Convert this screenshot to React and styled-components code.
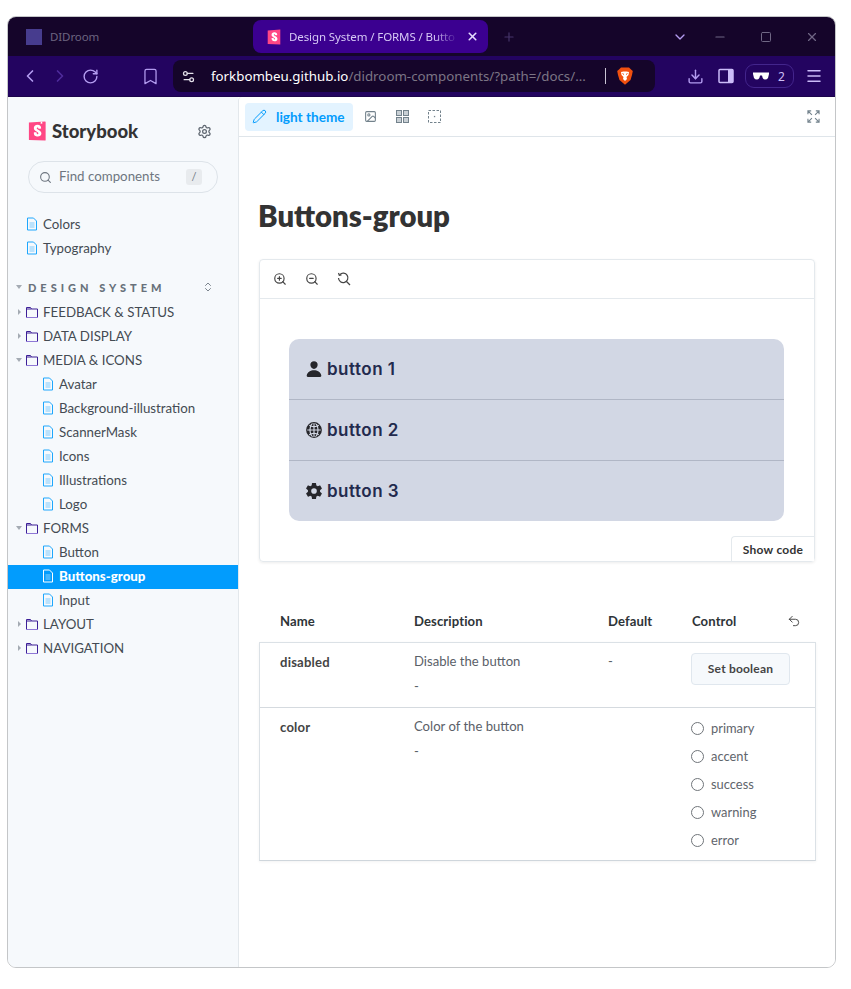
import React from 'react'
import styled, { createGlobalStyle } from 'styled-components'
import {
  Bookmark, ChevronDown, ChevronLeft, ChevronRight, Download, Image, Menu, Minus, Pencil, Plus,
  RotateCw, Search, Settings, Settings2, Square, Undo2, X, ZoomIn, ZoomOut, ChevronsUpDown,
} from 'lucide-react'
import { IoPerson, IoGlobe, IoSettingsSharp } from 'react-icons/io5'

const sans = '"Lato", "Open Sans", sans-serif'
const chromeFont = '"Noto Sans", "Open Sans", sans-serif'

const Global = createGlobalStyle`
  html, body { margin: 0; background: #fff; }
  * { box-sizing: border-box; }
`

const Window = styled.div`
  width: 829px;
  height: 952px;
  margin: 16px 0 0 7px;
  border: 1px solid #c4c6c8;
  border-radius: 9px;
  overflow: hidden;
  display: flex;
  flex-direction: column;
  font-family: ${sans};
`

const TitleBar = styled.div`
  height: 39px;
  background: #15052a;
  flex: none;
  display: flex;
  align-items: flex-start;
  padding-top: 3px;
  font-family: ${chromeFont};
  font-size: 11.5px;
  letter-spacing: -0.1px;
`

const PinnedTab = styled.div`
  width: 245px;
  height: 33px;
  display: flex;
  align-items: center;
  gap: 8px;
  padding-left: 18px;
  color: #6c6480;
`

const Favicon = styled.span`
  width: 16px;
  height: 16px;
  background: #473c8e;
`

const ActiveTab = styled.div`
  width: 235px;
  height: 33px;
  border-radius: 8px;
  background: #3b0090;
  color: #d6c8f5;
  display: flex;
  align-items: center;
  padding: 0 9px 0 14px;
  gap: 8px;
`

const TabTitle = styled.span`
  flex: 1;
  white-space: nowrap;
  mask-image: linear-gradient(to right, #000 86%, transparent);
`

const NewTab = styled.span`
  margin-left: 14px;
  height: 33px;
  display: flex;
  align-items: center;
  color: #46356a;
`

const WindowControls = styled.div`
  margin-left: auto;
  height: 33px;
  display: flex;
  align-items: center;
  padding-right: 16px;
  gap: 33px;
  color: #6f6784;
`

const TabMenu = styled.span`
  display: flex;
  margin-right: -8px;
  color: #b39cf0;
`

const ToolBar = styled.div`
  height: 41px;
  flex: none;
  background: #230460;
  border-bottom: 1px solid #1c044b;
  display: flex;
  align-items: center;
  padding-left: 7px;
  color: #b39cf0;
  font-family: ${chromeFont};
`

const NavIcons = styled.div`
  width: 158px;
  display: grid;
  grid-template-columns: repeat(5, 30px);
  justify-items: center;
  align-items: center;
`

const NavGap = styled.span``

const UrlBar = styled.div`
  width: 482px;
  height: 32px;
  border-radius: 8px;
  background: #15052a;
  display: flex;
  align-items: center;
  padding: 0 22px 0 8px;
  font-size: 13.3px;
  color: #7c7585;
`

const UrlHost = styled.span`
  color: #fff;
  margin-left: 15px;
`

const UrlDivider = styled.span`
  width: 1px;
  height: 16px;
  background: #c9c4d4;
  margin: 0 11px 0 auto;
`

const ToolActions = styled.div`
  display: flex;
  align-items: center;
  margin-left: 32px;
  gap: 11px;
`

const DownloadSlot = styled.span`
  display: flex;
  margin-right: 2.5px;
`

const ShieldPill = styled.div`
  width: 49px;
  height: 24px;
  border: 1px solid #43258c;
  border-radius: 9px;
  display: flex;
  align-items: center;
  justify-content: center;
  gap: 9px;
  font-size: 12px;
  color: #cdbff5;
`

const Body = styled.div`
  flex: 1;
  display: flex;
  min-height: 0;
`

const Sidebar = styled.aside`
  width: 230px;
  flex: none;
  background: #f6f9fc;
  padding: 23px 0 0;
  color: #333;
  font-size: 13.3px;
`

const Brand = styled.div`
  height: 22px;
  display: flex;
  align-items: center;
  padding: 0 26px 0 20px;
  gap: 6px;
`

const BrandName = styled.span`
  flex: 1;
  font-size: 18.5px;
  font-weight: 900;
  color: #333;
`

const SearchBox = styled.div`
  margin: 19px 20px 0;
  height: 32px;
  border: 1px solid #dde3e9;
  border-radius: 16px;
  display: flex;
  align-items: center;
  padding: 0 15px 0 10px;
  gap: 7px;
  color: #6e7680;
`

const SearchLabel = styled.span`
  flex: 1;
  padding-bottom: 2px;
`

const Kbd = styled.span`
  width: 16px;
  height: 16px;
  border-radius: 3px;
  background: #e8ebee;
  font-size: 11px;
  text-align: center;
  line-height: 16px;
`

const TopLinks = styled.div`
  margin-top: 20px;
`

const Row = styled.div`
  height: 24px;
  display: flex;
  align-items: center;
  padding: 0 0 3px ${p => p.$depth === 2 ? 33 : p.$depth === 1 ? 17 : 8}px;
  gap: 4px;
  color: ${p => p.$active ? '#fff' : '#444b53'};
  background: ${p => p.$active ? '#029cfd' : 'transparent'};
  font-weight: ${p => p.$active ? 900 : 400};
`

const RowLabel = styled.span`
  white-space: nowrap;
`

const Caret = styled.span`
  width: 0;
  height: 0;
  flex: none;
  border-style: solid;
  ${p => p.$open
    ? 'margin-right: -1px; border-width: 4px 3px 0 3px; border-color: #a4abb3 transparent transparent transparent;'
    : 'margin: 0 0 0 2px; border-width: 3px 0 3px 3px; border-color: transparent transparent transparent #a4abb3;'}
`

const Section = styled.div`
  height: 24px;
  margin: 15px 0 1px;
  display: flex;
  align-items: center;
  padding: 0 24px 2px 8px;
  font-size: 11px;
  font-weight: 900;
  letter-spacing: 4px;
  color: #68717b;
`

const SectionLabel = styled.span`
  flex: 1;
  margin-left: 7px;
`

const Main = styled.main`
  flex: 1;
  background: #fff;
  border-left: 1px solid #e3e8ec;
  border-radius: 4px 0 0 0;
  min-width: 0;
`

const StoryBar = styled.div`
  height: 40px;
  border-bottom: 1px solid #dfe5ea;
  display: flex;
  align-items: center;
  padding: 0 15px 0 6px;
  color: #73828c;
`

const ThemeButton = styled.div`
  width: 108px;
  height: 28px;
  border-radius: 4px;
  background: #e3f3ff;
  color: #029cfd;
  display: flex;
  align-items: center;
  padding-left: 7px;
  gap: 9px;
  font-size: 13.6px;
  font-weight: 700;
`

const StoryTools = styled.div`
  display: flex;
  align-items: center;
  gap: 19px;
  margin-left: 11px;
  flex: 1;
`

const Docs = styled.div`
  padding: 60px 20px 0;
`

const Title = styled.h1`
  margin: 0 0 0 -1px;
  font-size: 29.3px;
  line-height: 38px;
  font-weight: 800;
  color: #333;
`

const Canvas = styled.div`
  margin-top: 24px;
  width: 556px;
  height: 303px;
  border: 1px solid #e4e9ed;
  border-radius: 4px;
  box-shadow: 0 1px 3px rgba(0, 0, 0, 0.08);
  position: relative;
`

const CanvasTools = styled.div`
  height: 39px;
  border-bottom: 1px solid #e4e9ed;
  display: flex;
  align-items: center;
  gap: 18px;
  padding-left: 13px;
  color: #444;
`

const ButtonGroup = styled.div`
  margin: 40px 30px 0 29px;
  border-radius: 10px;
  background: #d2d7e4;
  overflow: hidden;
`

const GroupItem = styled.div`
  height: 60px;
  display: flex;
  align-items: center;
  padding-left: 16px;
  gap: 4px;
  font-family: "Inter", sans-serif;
  font-size: 17px;
  font-weight: 600;
  letter-spacing: 0.5px;
  color: #232a4d;
  & + & { height: 61px; border-top: 1px solid #b0b6c5; }
  svg { color: #26262b; }
`

const ShowCode = styled.div`
  position: absolute;
  right: 0;
  bottom: 0;
  width: 83px;
  height: 25px;
  border: 1px solid #e4e9ed;
  border-width: 1px 0 0 1px;
  border-radius: 4px 0 0 0;
  font-size: 12px;
  font-weight: 700;
  line-height: 25px;
  text-align: center;
  letter-spacing: 0.25px;
  color: #333;
  background: #fff;
`

const Args = styled.div`
  margin-top: 43px;
  width: 557px;
  font-size: 13.1px;
`

const argCols = 'grid-template-columns: 134px 194px 84px 1fr;'

const ArgsHead = styled.div`
  display: grid;
  ${argCols}
  height: 37px;
  padding: 0 0 5px 21px;
  align-items: center;
  font-weight: 700;
  letter-spacing: 0.1px;
  color: #2e3438;
  position: relative;
`

const ResetIcon = styled.span`
  position: absolute;
  right: 15px;
  top: 9px;
  display: flex;
  color: #333;
`

const ArgsBody = styled.div`
  border: 1px solid #dbe1e6;
  border-bottom-color: #cfd6dc;
  box-shadow: 0 1px 3px rgba(0, 0, 0, 0.05);
`

const ArgRow = styled.div`
  display: grid;
  ${argCols}
  padding: 10px 0 0 20px;
  height: ${p => p.$tall ? 153 : 64}px;
  color: #5a6068;
  & + & { border-top: 1px solid #d5dadf; }
`

const ArgName = styled.span`
  font-weight: 700;
  letter-spacing: 0.2px;
  color: #444;
  line-height: 18px;
`

const ArgText = styled.div`
  line-height: 25px;
  margin-top: -4px;
`

const BoolButton = styled.div`
  width: 99px;
  height: 32px;
  margin-left: -1px;
  border: 1px solid #e0e7ee;
  border-radius: 4px;
  background: #f6f9fc;
  font-size: 12px;
  font-weight: 700;
  text-align: center;
  line-height: 30px;
  letter-spacing: 0.2px;
  color: #444;
`

const Radios = styled.div`
  display: flex;
  flex-direction: column;
  margin: -4px 0 0 -1px;
  font-size: 12.9px;
`

const Radio = styled.div`
  height: 28px;
  display: flex;
  align-items: center;
  gap: 7px;
  color: #5f656c;
`

const RadioDot = styled.span`
  width: 13px;
  height: 13px;
  border: 1px solid #70757a;
  border-radius: 50%;
`

const sGlyph = 'M11.6 8.2c0 .4 2.6.2 3-.1 0-2.6-1.4-4-4-4-2.6 0-4.1 1.4-4.1 3.6 0 3.8 5.1 3.8 5.1 5.9 0 .6-.3.9-.9.9-.8 0-1.1-.4-1.1-1.9 0-.3-3-.4-3.1 0-.2 3.500 1.900 4.500 4.300 4.500 2.300 0 4.100-1.200 4.100-3.400 0-3.900-5.200-3.800-5.200-5.800 0-.8.6-.9.9-.9.4 0 1 .1 1 1.700Z'

const StorybookLogo = () => (
  <svg width="18" height="22" viewBox="0 0 20 22">
    <path d="M1 1.6 L19 .4 Q19.6 .4 19.6 1 V21 Q19.6 21.6 19 21.6 L1.6 21 Q1 21 1 20.4 Z" fill="#ff4785" />
    <path d="M14.2.7 l-.1 2.600 .9-.7 .8.6 V.6 Z" fill="#fff" />
    <path d={sGlyph} fill="#fff" />
  </svg>
)

const TabLogo = () => (
  <svg width="14" height="16" viewBox="0 0 20 22">
    <path d="M1 1.6 L19 .4 V21.6 L1 21 Z" fill="#ff4785" />
    <path d={sGlyph} fill="#fff" />
  </svg>
)

const BraveLogo = () => (
  <svg width="16" height="18" viewBox="0 0 16 18">
    <path d="M4 .5 H12 L14 2.5 L15.8 4 L15 8 L13.5 13 L8 17.800 L2.500 13 L1 8 L.2 4 L2 2.500Z" fill="#f1500f" />
    <path d="M4 5 L6.500 4.500 H9.500 L12 5 L11.500 8 L9.500 10 L10 12 L8 14 L6 12 L6.500 10 L4.500 8Z" fill="#fff" />
    <path d="M5.500 6.500 L7 7.500 M10.500 6.500 L9 7.500" stroke="#f1500f" strokeWidth="1" />
  </svg>
)

const Glasses = () => (
  <svg width="16" height="8" viewBox="0 0 16 8">
    <path d="M0 .5 H16 V2 L15 6 Q14 7.500 12 7.500 Q9.500 7.500 9 3.500 H7 Q6.500 7.500 4 7.500 Q2 7.500 1 6 L0 2Z" fill="#fff" />
  </svg>
)

const Panel = () => (
  <svg width="16" height="16" viewBox="0 0 16 16">
    <rect x="1" y="1.500" width="14" height="13" rx="1" fill="none" stroke="#cbbcf8" strokeWidth="1.500" />
    <rect x="10" y="2" width="5" height="12" fill="#cbbcf8" />
  </svg>
)

const GridIcon = () => (
  <svg width="13" height="13" viewBox="0 0 13 13" fill="#c9d0d5" stroke="currentColor">
    <rect x=".5" y=".5" width="5" height="5" />
    <rect x="7.500" y=".5" width="5" height="5" />
    <rect x=".5" y="7.500" width="5" height="5" />
    <rect x="7.500" y="7.500" width="5" height="5" />
  </svg>
)

const FrameIcon = () => (
  <svg width="13" height="13" viewBox="0 0 13 13" fill="none" stroke="currentColor">
    <rect x=".5" y=".5" width="12" height="12" strokeDasharray="2.500 1.500" />
    <rect x="5.900" y="5.900" width="1.300" height="1.300" fill="currentColor" stroke="none" />
  </svg>
)

const ExpandIcon = () => (
  <svg width="13" height="13" viewBox="0 0 14 14" fill="none" stroke="currentColor" strokeWidth="1.200">
    <path d="M1 4.500 V1 H4.500 M1 1 L5.300 5.300 M9.500 1 H13 V4.500 M13 1 L8.700 5.300 M1 9.500 V13 H4.500 M1 13 L5.300 8.700 M13 9.500 V13 H9.500 M13 13 L8.700 8.700" />
  </svg>
)

const ZoomResetIcon = () => (
  <svg width="14" height="14" viewBox="0 0 14 14" fill="none" stroke="currentColor" strokeWidth="1.200">
    <path d="M2.800 2.600 A4.700 4.700 0 1 1 1.500 6" />
    <path d="M1.500 1 L2.300 3.200 L4.500 2.800" />
    <path d="M9.500 9.500 L13 13" />
  </svg>
)

const Doc = ({ active }) => {
  const ink = active ? '#fff' : '#1ea7fd'
  return (
    <svg width="14" height="14" viewBox="0 0 14 14" fill="none" style={{ flex: 'none' }}>
      <path d="M2.500 1 H8.500 L11.500 4 V13 H2.500 Z" stroke={ink} />
      <path d="M4.500 6 H9.500 M4.500 8 H9.500 M4.500 10 H9.500" stroke={ink} strokeOpacity="0.55" />
    </svg>
  )
}

const Dir = () => (
  <svg width="14" height="14" viewBox="0 0 14 14" fill="none" style={{ flex: 'none' }}>
    <path d="M1.500 12 V2.500 H5.500 L6.500 4 H12.500 V12" stroke="#3c1f96" />
    <path d="M1 12.500 H13" stroke="#8f78d6" />
    <path d="M1.500 4 H6.500" stroke="#3c1f96" />
  </svg>
)

const docRow = (label, props = {}) => (
  <Row key={label} $depth={2} {...props}>
    <Doc active={props.$active} />
    <RowLabel>{label}</RowLabel>
  </Row>
)

const Group = ({ label, open }) => (
  <Row $depth={0}>
    <Caret $open={open} />
    <Dir />
    <RowLabel>{label}</RowLabel>
  </Row>
)

const colors = ['primary', 'accent', 'success', 'warning', 'error']

export default function App() {
  return (
    <>
      <Global />
      <Window>
        <TitleBar>
          <PinnedTab><Favicon />DIDroom</PinnedTab>
          <ActiveTab>
            <TabLogo />
            <TabTitle>Design System / FORMS / Butto</TabTitle>
            <X size={13} color="#e6dcff" strokeWidth={3} />
          </ActiveTab>
          <NewTab><Plus size={14} strokeWidth={2} /></NewTab>
          <WindowControls>
            <TabMenu><ChevronDown size={16} strokeWidth={2} /></TabMenu>
            <Minus size={14} />
            <Square size={12} />
            <X size={14} />
          </WindowControls>
        </TitleBar>
        <ToolBar>
          <NavIcons>
            <ChevronLeft size={20} />
            <ChevronRight size={20} color="#4f2c9c" />
            <RotateCw size={17} />
            <NavGap />
            <Bookmark size={19} strokeWidth={1.600} />
          </NavIcons>
          <UrlBar>
            <Settings2 size={15} color="#e4e1ea" />
            <UrlHost>forkbombeu.github.io</UrlHost>/didroom-components/?path=/docs/...
            <UrlDivider />
            <BraveLogo />
          </UrlBar>
          <ToolActions>
            <DownloadSlot><Download size={17} /></DownloadSlot>
            <Panel />
            <ShieldPill><Glasses />2</ShieldPill>
            <Menu size={18} color="#cbbcf8" />
          </ToolActions>
        </ToolBar>
        <Body>
          <Sidebar>
            <Brand>
              <StorybookLogo />
              <BrandName>Storybook</BrandName>
              <Settings size={15} color="#5e6670" />
            </Brand>
            <SearchBox>
              <Search size={13} />
              <SearchLabel>Find components</SearchLabel>
              <Kbd>/</Kbd>
            </SearchBox>
            <TopLinks>
              <Row $depth={1}><Doc /><RowLabel>Colors</RowLabel></Row>
              <Row $depth={1}><Doc /><RowLabel>Typography</RowLabel></Row>
            </TopLinks>
            <Section>
              <Caret $open />
              <SectionLabel>DESIGN SYSTEM</SectionLabel>
              <ChevronsUpDown size={12} color="#7c858e" />
            </Section>
            <Group label="FEEDBACK & STATUS" />
            <Group label="DATA DISPLAY" />
            <Group label="MEDIA & ICONS" open />
            {['Avatar', 'Background-illustration', 'ScannerMask', 'Icons', 'Illustrations', 'Logo'].map(l => docRow(l))}
            <Group label="FORMS" open />
            {docRow('Button')}
            {docRow('Buttons-group', { $active: true })}
            {docRow('Input')}
            <Group label="LAYOUT" />
            <Group label="NAVIGATION" />
          </Sidebar>
          <Main>
            <StoryBar>
              <ThemeButton><Pencil size={15} strokeWidth={1.6} />light theme</ThemeButton>
              <StoryTools>
                <Image size={13} />
                <GridIcon />
                <FrameIcon />
              </StoryTools>
              <ExpandIcon />
            </StoryBar>
            <Docs>
              <Title>Buttons-group</Title>
              <Canvas>
                <CanvasTools>
                  <ZoomIn size={14} />
                  <ZoomOut size={14} />
                  <ZoomResetIcon />
                </CanvasTools>
                <ButtonGroup>
                  <GroupItem><IoPerson size={18} />button 1</GroupItem>
                  <GroupItem><IoGlobe size={18} />button 2</GroupItem>
                  <GroupItem><IoSettingsSharp size={18} />button 3</GroupItem>
                </ButtonGroup>
                <ShowCode>Show code</ShowCode>
              </Canvas>
              <Args>
                <ArgsHead>
                  <span>Name</span>
                  <span>Description</span>
                  <span>Default</span>
                  <span>Control</span>
                  <ResetIcon><Undo2 size={14} strokeWidth={1.500} /></ResetIcon>
                </ArgsHead>
                <ArgsBody>
                  <ArgRow>
                    <ArgName>disabled</ArgName>
                    <ArgText>Disable the button<br />-</ArgText>
                    <ArgText>-</ArgText>
                    <BoolButton>Set boolean</BoolButton>
                  </ArgRow>
                  <ArgRow $tall>
                    <ArgName>color</ArgName>
                    <ArgText>Color of the button<br />-</ArgText>
                    <span />
                    <Radios>
                      {colors.map(c => <Radio key={c}><RadioDot />{c}</Radio>)}
                    </Radios>
                  </ArgRow>
                </ArgsBody>
              </Args>
            </Docs>
          </Main>
        </Body>
      </Window>
    </>
  )
}
